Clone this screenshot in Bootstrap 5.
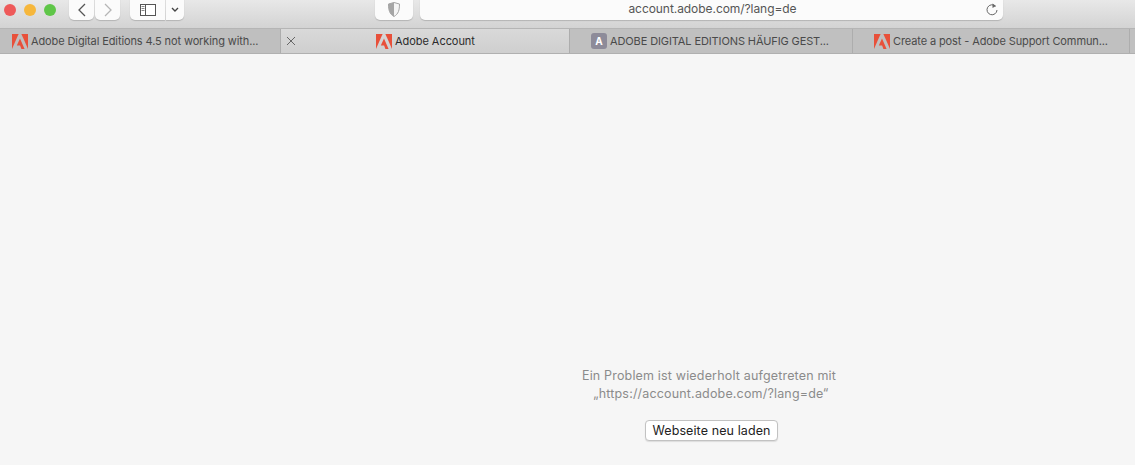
<!DOCTYPE html>
<html lang="de">
<head>
<meta charset="utf-8">
<title>Adobe Account</title>
<link href="https://cdn.jsdelivr.net/npm/bootstrap@5.3.0/dist/css/bootstrap.min.css" rel="stylesheet">
<style>
html,body{height:100%;overflow:hidden}
body{background:#f6f6f6;font-family:Inter,"Liberation Sans",sans-serif;color:#333}
.page{width:1135px;height:465px}
.toolbar-bar{height:29px;background:linear-gradient(#e8e8e8,#d3d3d3);border-bottom:1px solid #b5b5b5;padding-left:4px;flex:none}
.light{width:12px;height:12px;border-radius:50%;margin-right:8px;margin-top:4px}
.l-red{background:#ee5a5a}.l-yellow{background:#f6b73c}.l-green{background:#5fc648}
.tb-btn{height:21px;background:#fbfbfb;border-radius:0 0 5px 5px;box-shadow:0 1px 1px #b4b4b4;margin-top:-1px}
.b-back{width:25px;margin-left:5px}
.b-fwd{width:25px;margin-left:1px}
.b-side{width:35px;margin-left:10px;border-radius:0 0 0 5px}
.b-more{width:18px;margin-left:1px;border-radius:0 0 5px 0}
.b-shield{width:38px;margin-left:191px}
.b-url{width:583px;margin-left:7px;padding-left:2px;font-size:12px;letter-spacing:-.06px;color:#555;position:relative;padding-top:1px}
.b-reload{position:absolute;right:4px;top:3px}
.tab-row{height:25px;background:#c0c0c0;border-bottom:1px solid #b0b0b0;flex:none;font-size:11px;letter-spacing:-.11px;line-height:24px}
.tabx{color:#4a4a4a;white-space:nowrap;flex:none;border-right:1px solid #adadad;height:24px}
.t1{width:281px;padding-left:12px;background:#bfbfbf}
.t2{width:289px;background:linear-gradient(#d9d9d9,#cfcfcf);color:#2b2b2b;padding-left:95px;position:relative;letter-spacing:-.05px}
.t3{width:283px;padding-left:21px;background:#c0c0c0}
.t4{width:277px;padding-left:21px;background:#c0c0c0}
.t5{flex:1;background:#c0c0c0}
.fav{margin-right:3px;flex:none}
.fav-a{width:16px;height:16px;border-radius:3px;background:#8d8b99;color:#fff;font-size:10px;font-weight:700;line-height:16px;text-align:center;margin-right:3px;flex:none}
.close-x{position:absolute;left:5px;top:7px}
.msg-zone{padding-top:313px;width:300px;margin-left:559px;text-align:center}
.msg-text{font-size:12.5px;line-height:18px;color:#8b8b8b;letter-spacing:.17px}
.reload-btn{display:block;margin:17px 0 0 86px;height:21px;width:133px;padding:0;font-size:12.5px;line-height:19px;letter-spacing:.1px;color:#222;background:#fff;border:1px solid #c2c2c2;border-radius:4px;box-shadow:0 1px 1px #ddd;font-family:inherit}
</style>
</head>
<body>
<svg width="0" height="0" class="d-block position-absolute"><defs>
<g id="adobe"><polygon points="0,0 6.600,0 0,15" fill="#e8503a"/><polygon points="9.400,0 16,0 16,15" fill="#e8503a"/><polygon points="8,4.500 12.600,15 9.400,15 8.100,11.600 4.800,11.600" fill="#e8503a"/></g>
</defs></svg>
<div class="page d-flex flex-column">
  <div class="toolbar-bar d-flex align-items-start">
    <span class="light l-red"></span><span class="light l-yellow"></span><span class="light l-green"></span>
    <div class="tb-btn b-back d-flex align-items-center justify-content-center"><svg width="10" height="14" viewBox="0 0 10 14"><path d="M8 1 2 7l6 6" fill="none" stroke="#555" stroke-width="1.3"/></svg></div>
    <div class="tb-btn b-fwd d-flex align-items-center justify-content-center"><svg width="10" height="14" viewBox="0 0 10 14"><path d="M2 1l6 6-6 6" fill="none" stroke="#b5b5b5" stroke-width="1.3"/></svg></div>
    <div class="tb-btn b-side d-flex align-items-center justify-content-center"><svg width="16" height="12" viewBox="0 0 16 12"><rect x=".5" y=".5" width="15" height="11" fill="#fff" stroke="#555"/><path d="M5.500 0v12" stroke="#555"/><path d="M1.500 2.500h3M1.500 4.500h3M1.500 6.500h3" stroke="#888"/></svg></div>
    <div class="tb-btn b-more d-flex align-items-center justify-content-center"><svg width="8" height="6" viewBox="0 0 8 6"><path d="M1 1l3 3 3-3" fill="none" stroke="#444" stroke-width="1.4"/></svg></div>
    <div class="tb-btn b-shield d-flex align-items-center justify-content-center"><svg width="12" height="15" viewBox="0 0 12 15"><path d="M6 .5 11.500 2c0 6-1 10-5.500 12.500C1.500 12 .5 8 .5 2z" fill="#f4f4f4" stroke="#a5a5a5"/><path d="M6 .5.500 2C.5 8 1.500 12 6 14.500z" fill="#a5a5a5"/></svg></div>
    <div class="tb-btn b-url text-center">account.adobe.com/?lang=de
      <svg class="b-reload" width="14" height="15" viewBox="0 0 14 15"><path d="M10.500 4.200A5 5 0 1 0 12 8" fill="none" stroke="#666" stroke-width="1"/><path d="M7.500 1.500 11 4l-3.500 2z" fill="#666"/></svg>
    </div>
  </div>
  <div class="tab-row d-flex">
    <div class="tabx t1 d-flex align-items-center"><svg class="fav" width="16" height="15" viewBox="0 0 16 15"><use href="#adobe"/></svg>Adobe Digital Editions 4.5 not working with...</div>
    <div class="tabx t2 d-flex align-items-center"><svg class="close-x" width="10" height="10" viewBox="0 0 10 10"><path d="M1 1l8 8M9 1l-8 8" stroke="#666" stroke-width="1"/></svg><svg class="fav" width="16" height="15" viewBox="0 0 16 15"><use href="#adobe"/></svg>Adobe Account</div>
    <div class="tabx t3 d-flex align-items-center"><span class="fav-a">A</span>ADOBE DIGITAL EDITIONS HÄUFIG GEST...</div>
    <div class="tabx t4 d-flex align-items-center"><svg class="fav" width="16" height="15" viewBox="0 0 16 15"><use href="#adobe"/></svg>Create a post - Adobe Support Commun...</div>
    <div class="t5"></div>
  </div>
  <div class="msg-zone">
    <div class="msg-text">Ein Problem ist wiederholt aufgetreten mit<br>&nbsp;„https://account.adobe.com/?lang=de“</div>
    <button type="button" class="btn reload-btn">Webseite neu laden</button>
  </div>
</div>
</body>
</html>
